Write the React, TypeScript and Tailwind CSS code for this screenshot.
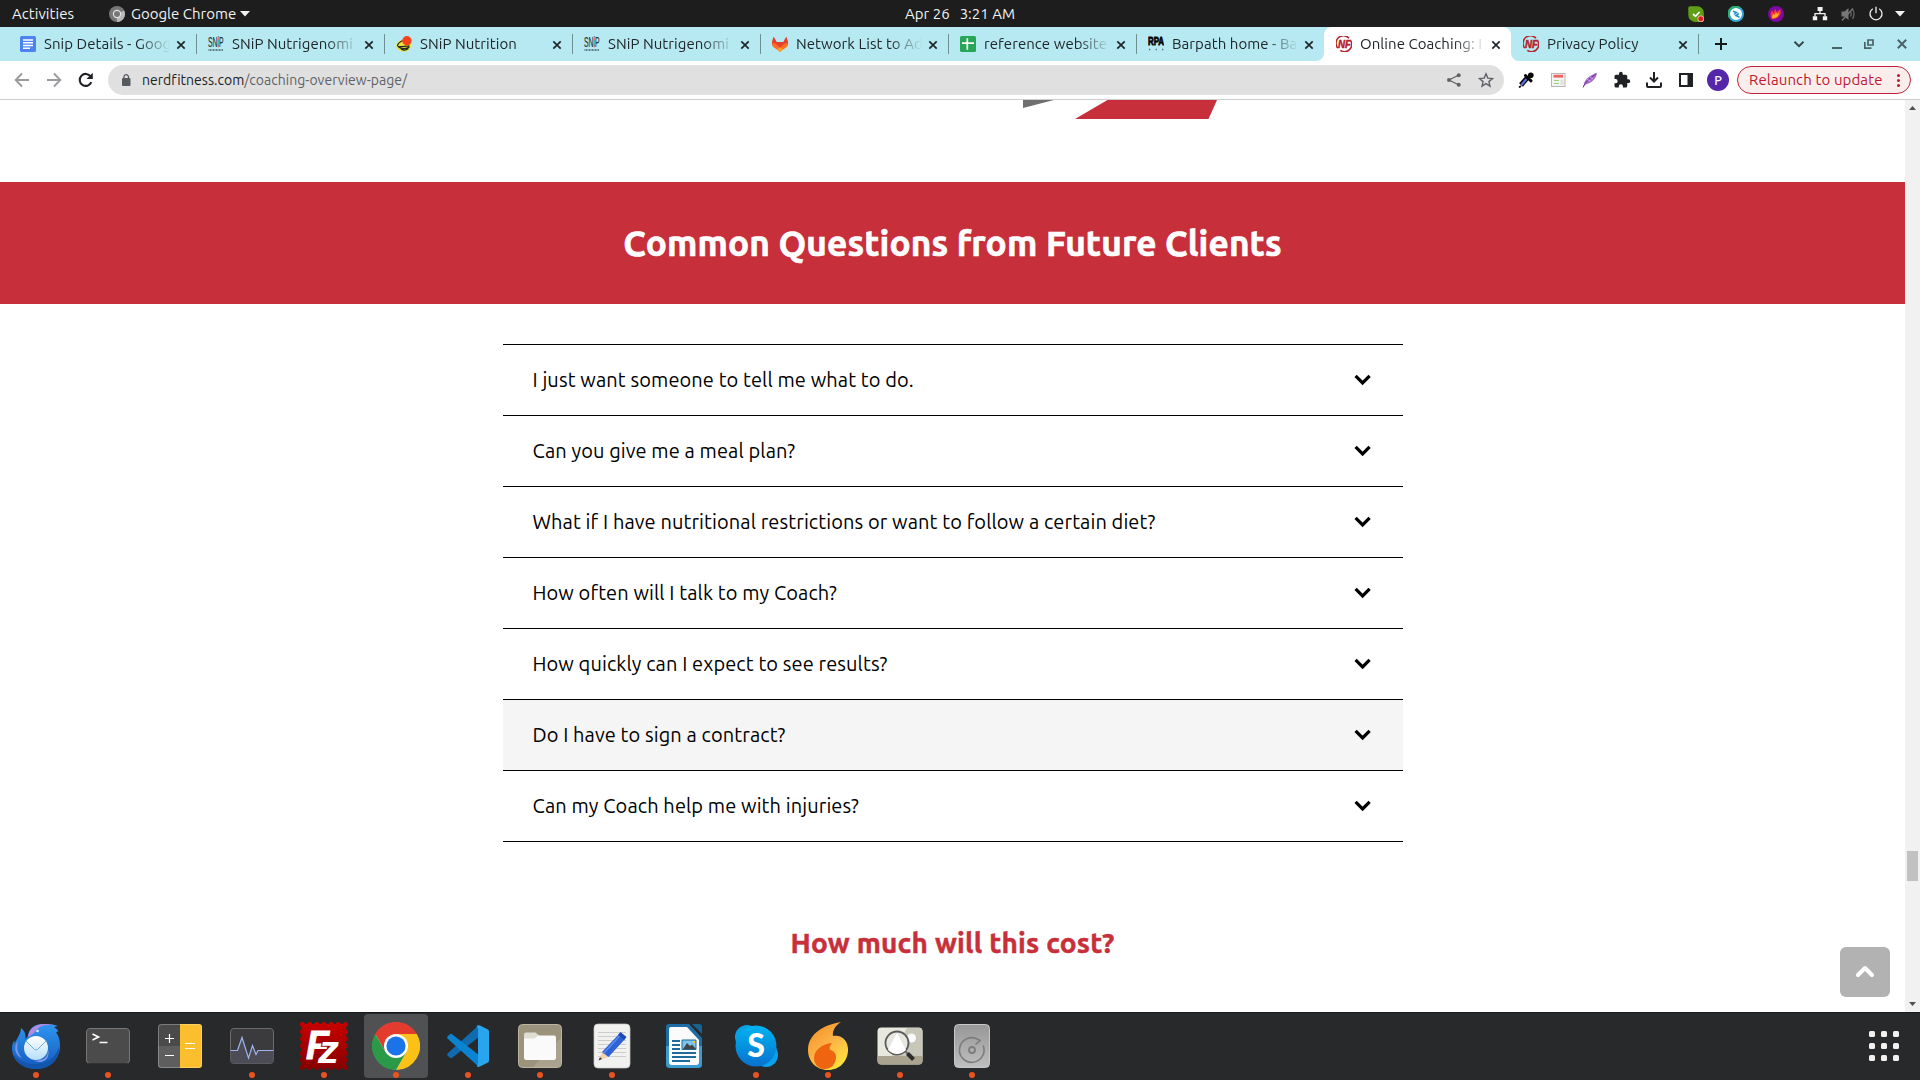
import React from "react";

type P = { children?: React.ReactNode; className?: string };

/* ---------- small helpers ---------- */

const Svg = ({ s = 16, vb, children, className = "" }: { s?: number; vb?: string } & P) => (
  <svg width={s} height={s} viewBox={vb ?? `0 0 ${s} ${s}`} fill="none" className={"block shrink-0 " + className}>
    {children}
  </svg>
);

const Cell = ({ children }: P) => <div className="flex h-8 w-8 shrink-0 items-center justify-center">{children}</div>;

/* ---------- favicons ---------- */

const DocsIcon = () => (
  <Svg>
    <rect width="16" height="16" rx="1.5" fill="#4c83ee" />
    <path d="M3 4h10M3 6.7h10M3 9.4h10M3 12.2h7" stroke="#fff" strokeWidth="1.5" />
  </Svg>
);

const SnipIcon = () => (
  <Svg>
    <text x="0" y="11" fontFamily="Liberation Sans" fontSize="14.5" textLength="15.6" lengthAdjust="spacingAndGlyphs" fill="#24383d" stroke="#24383d" strokeWidth=".2">SNiP</text>
    <path d="M10.300 1v3M10.300 9.500v2" stroke="#e2735a" strokeWidth="1" />
    <path d="M10.300 4.500v4" stroke="#4cc3a0" strokeWidth="1" />
    <path d="M.5 14h15" stroke="#3f5a60" strokeWidth="2" strokeDasharray="1 .5" opacity=".75" />
  </Svg>
);

const NutritionIcon = () => (
  <Svg>
    <ellipse cx="7.700" cy="9.700" rx="7.500" ry="6" fill="#f2e33a" />
    <path d="M7.500 4.500C4.500 5 1.500 8 1.500 9.800s6 .4 12 0M2.500 11c2 2 8 2.600 11-.3M5 13c2.500 1.600 5.500 1 7.500-.4" stroke="#1f2b25" strokeWidth="1.200" />
    <circle cx="10.900" cy="4.800" r="4.700" fill="#f9431c" />
  </Svg>
);

const GitlabIcon = () => (
  <Svg>
    <path d="M1.700.6 0 5.500v3L8 15.700l8-7.200v-3L14.300.6 11.300 6H4.700z" fill="#e2432a" />
    <path d="M0 7.500c2-.8 3.400 0 4.300.8L8 11.800l3.700-3.500c.9-.8 2.300-1.600 4.300-.8 0 2-.8 3.200-2 4L8 15.700 2 11.500C.8 10.700 0 9.500 0 7.500z" fill="#fc6d26" />
    <path d="M8 11.500 4.700 13.400 8 15.700l3.300-2.300z" fill="#fca326" />
  </Svg>
);

const SheetsIcon = () => (
  <Svg>
    <rect width="16" height="16" rx="1.5" fill="#27a658" />
    <path d="M2 7.200h12M7.300 2.200v11.600" stroke="#fff" strokeWidth="1.700" />
  </Svg>
);

const RpaIcon = () => (
  <Svg>
    <text x="0" y="9" fontFamily="Liberation Sans" fontWeight="700" fontSize="10.500" textLength="16" lengthAdjust="spacingAndGlyphs" fill="#050505" stroke="#050505" strokeWidth=".8">RPA</text>
    <path d="M1 13.500h1.200M7.600 13.500h1.200M14 13.500h1.200" stroke="#47656b" strokeWidth="1.400" />
  </Svg>
);

const NerdIcon = () => (
  <Svg>
    <path d="M13 2.300A7.200 7.200 0 0 0 1.800 12M14.800 5A7.200 7.200 0 0 1 4.300 14.300" stroke="#b5232b" strokeWidth="1.500" />
    <text x="2" y="12" fontFamily="Liberation Sans" fontWeight="700" fontStyle="italic" fontSize="10.500" textLength="13" lengthAdjust="spacingAndGlyphs" fill="#b5232b" stroke="#b5232b" strokeWidth=".5">NF</text>
  </Svg>
);

/* ---------- top system bar ---------- */

const TopBar = () => (
  <header className="grid h-[27px] grid-cols-3 bg-[#1d1d1d] text-[15px] leading-[27px] text-[#f2f2f2]">
    <div className="flex items-center pl-3">
      <span className="w-[97px] tracking-[0.06px]">Activities</span>
      <Svg>
        <circle cx="8" cy="8" r="8" fill="#777" />
        <path d="M8 8 15.200 4.600A8 8 0 0 1 8 16z" fill="#b9b9b9" />
        <circle cx="8" cy="8" r="4.200" fill="#e4e4e4" />
        <circle cx="8" cy="8" r="3" fill="#777" />
      </Svg>
      <span className="ml-1.5 w-[109px]">Google Chrome</span>
      <svg width="10" height="6" viewBox="0 0 10 6" className="block"><path d="M0 0h10L5 5.500z" fill="#f2f2f2" /></svg>
    </div>
    <div className="flex justify-center gap-2.5 whitespace-nowrap">
      <span>Apr 26</span>
      <span>3:21 AM</span>
    </div>
    <div className="flex items-center justify-end pr-[15px]">
      <Svg className="mr-6">
        <path d="M2 .3h7.500a6.500 6.500 0 0 1 6.300 6.500V14a2 2 0 0 1-2 2H7A7 7 0 0 1 .3 9V2A1.700 1.700 0 0 1 2 .3z" fill="#5f9f16" />
        <path d="m5 8 2.500 2.300L11.500 6" stroke="#fff" strokeWidth="1.800" />
        <circle cx="12.800" cy="12.800" r="3" fill="#e02020" stroke="#f2d5c5" strokeWidth=".8" />
      </Svg>
      <Svg className="mr-6">
        <circle cx="8" cy="8" r="7" fill="#fff" stroke="#31a7d8" strokeWidth="2" />
        <path d="M2 12A7 7 0 0 1 12 2.300" stroke="#2cae71" strokeWidth="2" />
        <path d="M5 5.200 8.500 6.500 6 8.500M10.800 7.500 8 9.500l3.500 1.700" stroke="#1f93c9" strokeWidth="1.600" />
      </Svg>
      <Svg className="mr-[28px]">
        <circle cx="8" cy="8" r="8" fill="#7d09a0" />
        <path d="M4 13C1.500 9 3 6 4 4l1.500 3L7.200 2.500 8.500 6 12.500 3c-.5 2 1 3 0 5-1.200 3-4 5-8.500 5z" fill="#f5353a" />
        <path d="M4.500 12.500C3.500 10 5 8 5.500 8l1 1L8 6l.8 2L11 6.500c0 3-2 5.500-6.500 6z" fill="#ffb01f" />
      </Svg>
      <Svg className="mr-3">
        <path d="M5.600 1h5v4h-5zM.8 10.300h4.400v4H.8zM10.800 10.300h4.400v4h-4.400z" fill="#f2f2f2" />
        <path d="M8 5v2.600M3 10.500V7.700h10v2.800" stroke="#f2f2f2" strokeWidth="1.300" />
      </Svg>
      <Svg className="mr-3">
        <path d="M1.500 5.500h3L8.500 2v12l-4-3.500h-3z" fill="#777" />
        <path d="M10.500 5.500q1.500 2.500 0 5M12.500 3q3 5 0 10" stroke="#666" strokeWidth="1.300" />
        <path d="m2 14.500 11-12" stroke="#777" strokeWidth="1.400" />
      </Svg>
      <Svg className="mr-[11px]">
        <path d="M4.800 2.700a6 6 0 1 0 6.400 0M8 .8v6.500" stroke="#f2f2f2" strokeWidth="1.300" />
      </Svg>
      <svg width="10" height="6" viewBox="0 0 10 6" className="block"><path d="M0 0h10L5 5.500z" fill="#f2f2f2" /></svg>
    </div>
  </header>
);

/* ---------- tab strip ---------- */

const TabClose = () => (
  <Svg s={10} className="mt-px"><path d="m1.300 1.300 7.400 7.400m0-7.400-7.400 7.400" stroke="#20272a" strokeWidth="1.700" /></Svg>
);

const tabs: { icon: React.FC; title: string; active?: boolean; noLine?: boolean; narrow?: boolean }[] = [
  { icon: DocsIcon, title: "Snip Details - Goog" },
  { icon: SnipIcon, title: "SNiP Nutrigenomi" },
  { icon: NutritionIcon, title: "SNiP Nutrition" },
  { icon: SnipIcon, title: "SNiP Nutrigenomi" },
  { icon: GitlabIcon, title: "Network List to Ad" },
  { icon: SheetsIcon, title: "reference website" },
  { icon: RpaIcon, title: "Barpath home - Ba", noLine: true },
  { icon: NerdIcon, title: "Online Coaching: I", active: true, noLine: true, narrow: true },
  { icon: NerdIcon, title: "Privacy Policy", narrow: true },
];

const TabStrip = () => (
  <div className="flex h-[34px] bg-[#b6e9f1] pl-2 text-[#20272a]">
    {tabs.map((t, i) => (
      <div
        key={i}
        className={
          "relative flex h-full shrink-0 items-center pl-3 text-[15px] leading-[34px] " +
          (t.narrow ? "w-[187px] " : "w-[188px] ") +
          (t.active ? "rounded-t-lg bg-white" : "")
        }
      >
        {t.active && (
          <>
            <svg width="8" height="8" className="absolute -left-2 bottom-0"><path d="M8 0v8H0a8 8 0 0 0 8-8z" fill="#fff" /></svg>
            <svg width="8" height="8" className="absolute -right-2 bottom-0"><path d="M0 0v8h8a8 8 0 0 1-8-8z" fill="#fff" /></svg>
          </>
        )}
        <t.icon />
        <span
          className={
            "ml-2 whitespace-nowrap tracking-[0.06px] [mask-image:linear-gradient(to_right,#000_94px,transparent_126px)] " +
            (t.narrow ? "w-[125px]" : "w-[126px]")
          }
        >
          {t.title}
        </span>
        <span className="ml-1.5"><TabClose /></span>
        {!t.noLine && <span className="absolute right-[-1px] top-[7px] h-5 w-px bg-[#708f94]" />}
      </div>
    ))}
    <div className="flex flex-1 items-center pl-4">
      <Svg s={14}><path d="M7 1v12M1 7h12" stroke="#17191b" strokeWidth="2" /></Svg>
      <Svg s={12} className="ml-[65px]"><path d="m1.500 3.800 4.500 4.400 4.500-4.400" stroke="#33464a" strokeWidth="1.900" /></Svg>
      <Svg s={10} className="ml-[27px]"><path d="M0 9h10" stroke="#4c6266" strokeWidth="2" /></Svg>
      <Svg s={10} className="ml-[22px]">
        <path d="M4 1h5v5H4z" stroke="#4c6266" strokeWidth="1.700" />
        <path d="M.8 3v6.200H7.500" stroke="#4c6266" strokeWidth="1.700" />
      </Svg>
      <Svg s={10} className="ml-[23px]"><path d="m.8.8 8.400 8.400m0-8.400L.8 9.200" stroke="#4c6266" strokeWidth="2" /></Svg>
    </div>
  </div>
);

/* ---------- toolbar ---------- */

const Toolbar = () => (
  <div className="flex h-[39px] items-center border-b border-[#cccdce] bg-white pl-3.5">
    <div className="flex gap-4">
      <Svg><path d="M15 8H2M8 1.500 1.700 8 8 14.500" stroke="#9a9b9e" strokeWidth="1.900" /></Svg>
      <Svg><path d="M1 8h13M8 1.500 14.300 8 8 14.500" stroke="#9a9b9e" strokeWidth="1.900" /></Svg>
      <Svg>
        <path d="M13.300 10.200A6 6 0 1 1 12.700 4.500" stroke="#202124" strokeWidth="2.100" />
        <path d="M14.800.8v6.300H8.500z" fill="#202124" />
      </Svg>
    </div>
    <div className="ml-3.5 flex h-[30px] w-[1396px] items-center rounded-full bg-[#e0e0e0] pl-[13px] pr-2.5">
      <svg width="10" height="12" viewBox="0 0 10 12" className="block">
        <rect x="1" y="4" width="8.500" height="8" rx="1" fill="#56595d" />
        <path d="M2.900 4.500V3a2.300 2.300 0 0 1 4.600 0v1.500" fill="none" stroke="#56595d" strokeWidth="1.300" />
      </svg>
      <span className="ml-[11px] flex-1 text-[14px] tracking-[0.02px] text-[#5f6368]">
        <span className="text-[#202124]">nerdfitness.com</span>/coaching-overview-page/
      </span>
      <Svg>
        <path d="M13 3 3 8l10 5" stroke="#5f6368" strokeWidth="1.300" />
        <circle cx="12.700" cy="3.200" r="2" fill="#5f6368" />
        <circle cx="3" cy="8" r="2" fill="#5f6368" />
        <circle cx="12.700" cy="12.800" r="2" fill="#5f6368" />
      </Svg>
      <Svg className="ml-4">
        <path d="m8 1.800 1.800 4.300 4.700.4-3.600 3.100 1.100 4.600L8 11.700l-4 2.500 1.100-4.600-3.600-3.100 4.700-.4z" stroke="#5f6368" strokeWidth="1.400" />
      </Svg>
    </div>
    <div className="ml-1.5 flex items-center">
      <Cell>
        <Svg>
          <path d="m3 13 7-8" stroke="#0a0a0a" strokeWidth="5" />
          <path d="m3.500 12.800 5-5.800" stroke="#5a6ee0" strokeWidth="2.200" />
          <path d="m7.500 3.500 5.500 5.300M12 4.500 10 6.500" stroke="#050505" strokeWidth="3" strokeLinecap="round" />
          <circle cx="12.800" cy="3.200" r="2.800" fill="#050505" />
          <path d="m1 15.500 2-1.500" stroke="#0a0a0a" strokeWidth="1.600" />
        </Svg>
      </Cell>
      <Cell>
        <Svg>
          <rect x="1.500" y="1.500" width="13.500" height="13" fill="#f3f3f3" stroke="#b5b5b5" />
          <path d="M3.500 4.200h9.500" stroke="#f0625b" strokeWidth="2.800" />
          <path d="M4 8.500h5M4 11.500h5" stroke="#9bd17a" strokeWidth="1.200" />
          <path d="M10.500 8h3v5h-3z" fill="#e1e1e1" />
        </Svg>
      </Cell>
      <Cell>
        <Svg>
          <path d="M1.500 14.500C2 7 8 3.500 15 .8 14 7 10 11 3.500 12.500z" fill="#a46bc8" />
          <path d="M1 15.500C4 9 8 6 14 2" stroke="#6f2f9c" strokeWidth="1" />
          <path d="M5 7.500 8.500 9M8 5l3 2" stroke="#e5cff1" strokeWidth=".7" />
        </Svg>
      </Cell>
      <Cell>
        <Svg s={18} vb="0 0 24 24">
          <path d="M20.500 11H19V7a2 2 0 0 0-2-2h-4V3.500a2.500 2.500 0 0 0-5 0V5H4a2 2 0 0 0-2 2v3.800h1.500a2.700 2.700 0 0 1 0 5.400H2V20a2 2 0 0 0 2 2h3.800v-1.500a2.700 2.700 0 0 1 5.400 0V22H17a2 2 0 0 0 2-2v-4h1.500a2.500 2.500 0 0 0 0-5z" fill="#202124" />
        </Svg>
      </Cell>
      <Cell>
        <Svg>
          <path d="M8 0v8.500M4 5.500l4 4 4-4M1 10.500V14a1 1 0 0 0 1 1h12a1 1 0 0 0 1-1v-3.500" stroke="#202124" strokeWidth="2" />
        </Svg>
      </Cell>
      <Cell>
        <Svg>
          <path d="M2 2h12v12H2z" stroke="#202124" strokeWidth="2" />
          <path d="M9.500 2H14v12H9.500z" fill="#202124" />
        </Svg>
      </Cell>
      <Cell>
        <span className="flex h-[22px] w-[22px] items-center justify-center rounded-full bg-[#5526a8] text-[12.5px] font-medium leading-none text-white">P</span>
      </Cell>
    </div>
    <div className="ml-[3px] flex h-7 w-[174px] items-center rounded-full border border-[#c5203a] bg-[#faeeed] pl-[11px] text-[15px] text-[#c0172f]">
      <span className="w-[135px] whitespace-nowrap tracking-[0.12px]">Relaunch to update</span>
      <span className="ml-[13px] flex flex-col gap-0.5">
        <i className="h-[3px] w-[3px] rounded-full bg-[#c0172f]" />
        <i className="h-[3px] w-[3px] rounded-full bg-[#c0172f]" />
        <i className="h-[3px] w-[3px] rounded-full bg-[#c0172f]" />
      </span>
    </div>
  </div>
);

/* ---------- page ---------- */

const questions: { q: string; hover?: boolean }[] = [
  { q: "I just want someone to tell me what to do." },
  { q: "Can you give me a meal plan?" },
  { q: "What if I have nutritional restrictions or want to follow a certain diet?" },
  { q: "How often will I talk to my Coach?" },
  { q: "How quickly can I expect to see results?" },
  { q: "Do I have to sign a contract?", hover: true },
  { q: "Can my Coach help me with injuries?" },
];

const Page = () => (
  <main className="relative flex h-[912px] bg-white">
    <div className="flex flex-1 flex-col overflow-hidden">
      <div className="h-[82px]">
        <svg width="194" height="20" viewBox="1023 0 194 20" className="ml-[1023px] block">
          <path d="M1023 0h31l-31 8z" fill="#6f6f6f" />
          <path d="M1107.500 0H1217l-8.500 19H1075z" fill="#c72f3b" />
        </svg>
      </div>
      <h1 className="flex h-[122px] items-center justify-center bg-[#c72f3b] text-[35.2px] font-bold tracking-[0.14px] text-white [-webkit-text-stroke:0.7px_#fff]">
        <span>Common Questions from Future Clients</span>
      </h1>
      <ul className="mx-auto mt-10 w-[900px] border-t border-black">
        {questions.map((x) => (
          <li
            key={x.q}
            className={
              "flex h-[71px] items-center justify-between border-b border-black pl-[30px] pr-[31px] text-[20px] tracking-[0.1px] text-black " +
              (x.hover ? "bg-[#f5f5f5]" : "")
            }
          >
            <span>{x.q}</span>
            <Svg s={18}><path d="M1.600 4.800 8.600 11.900 15.600 4.800" stroke="#000" strokeWidth="3.200" /></Svg>
          </li>
        ))}
      </ul>
      <h2 className="mt-20 text-center text-[28px] font-bold leading-[42px] tracking-[0.2px] text-[#c72f3b] [-webkit-text-stroke:0.5px_#c72f3b]">How much will this cost?</h2>
    </div>
    <div className="flex w-[15px] flex-col items-center bg-[#f1f1f1]">
      <svg width="7" height="4" className="mt-1.5 block"><path d="M3.500 0 7 4H0z" fill="#505050" /></svg>
      <div className="mt-[741px] h-[30px] w-[11px] bg-[#c1c1c1]" />
      <svg width="7" height="4" className="mb-1.5 mt-auto block"><path d="M0 0h7L3.500 4z" fill="#505050" /></svg>
    </div>
    <button className="absolute bottom-[15px] right-[30px] flex h-[50px] w-[50px] items-center justify-center rounded-md bg-[#b2b2b2]">
      <Svg s={20}><path d="m3 13 7-7 7 7" stroke="#fff" strokeWidth="4" strokeLinecap="round" strokeLinejoin="round" /></Svg>
    </button>
  </main>
);

/* ---------- dock ---------- */

const Dock48 = ({ children }: P) => <Svg s={48}>{children}</Svg>;

const Thunderbird = () => (
  <Dock48>
    <defs>
      <linearGradient id="tb" x1="0" y1="0" x2="0" y2="1"><stop stopColor="#2f96f0" /><stop offset="1" stopColor="#1459bd" /></linearGradient>
      <linearGradient id="tbe" x1="0" y1="0" x2="0" y2="1"><stop stopColor="#fff" /><stop offset="1" stopColor="#b5defb" /></linearGradient>
    </defs>
    <path d="M16 14C17 5 25 1.500 32 2c5 .3 10 .5 14 2-2 .3-3 .8-4 1.500 2 .5 3.500 2 4.500 4-1 0-2 .3-2.500.8C47 14 48 19 48 24c0 13-10 23-24 23S0 38 0 26c0-3 1-6 2.500-7.500V22C5 16 9 12 9 6c4 3 5 7 4.500 11z" fill="url(#tb)" />
    <path d="M2 33c7 8 18 11 29 8 9-3 14-9 16-16 1 13-9 22-23 22C12 47 5 41 2 33z" fill="#1255ad" />
    <path d="M16 15C17 7 23 2 32 2c4 0 8 .3 11 1-6-.5-12 0-15 2-5 3-6 8-12 10z" fill="#b08be4" />
    <path d="M6 19c-2 7 0 13 4 17-7-2-9-12-4-17z" fill="#7997ea" />
    <path d="M36 27c1 6-3 10-7 11-4 1-6 1-8 0 8 5 18 0 15-11z" fill="#8b9df0" />
    <circle cx="24" cy="26" r="12" fill="url(#tbe)" />
    <path d="m14 19 8.500 8.500q1.500 1 3 0L34 19" stroke="#71abe0" strokeWidth="1" />
    <circle cx="25.500" cy="9" r="1.300" fill="#d8edff" />
  </Dock48>
);

const Terminal = () => (
  <Dock48>
    <rect x="2.500" y="6.500" width="43" height="35" rx="3.500" fill="#4b4b4b" stroke="#777" />
    <path d="M4 41.500h40" stroke="#333" />
    <path d="m8.500 12 6 3-6 3" stroke="#fff" strokeWidth="1.600" /><path d="M15.500 20.500h8" stroke="#fff" strokeWidth="1.500" />
  </Dock48>
);

const Calculator = () => (
  <Dock48>
    <path d="M5 2h19v44H5a3 3 0 0 1-3-3V5a3 3 0 0 1 3-3z" fill="#4a4a4a" />
    <path d="M2 24h22v22H5a3 3 0 0 1-3-3z" fill="#5e5e5e" />
    <path d="M24 2h19a3 3 0 0 1 3 3v38a3 3 0 0 1-3 3H24z" fill="#fbbe2c" />
    <rect x="2.500" y="2.500" width="43" height="43" rx="3" stroke="#fff" opacity=".28" />
    <path d="M13.500 12v9M9 16.500h9M9 33.500h9M29 21.500h10M29 26.500h10" stroke="#fff" strokeWidth="1.200" />
  </Dock48>
);

const Monitor = () => (
  <Dock48>
    <rect x="2.500" y="6.500" width="43" height="35" rx="3.500" fill="#3b3b3d" stroke="#6b6b6b" />
    <path d="M2.500 28h7L14 15.500 20.500 36l4-12 3.500 9 2-5h15.500v10a3.500 3.500 0 0 1-3.500 3.500H6A3.500 3.500 0 0 1 2.500 38z" fill="#4b4c55" />
    <path d="M2.500 28.500h7L14 15.500 20.500 36l4-12.500 3.500 9 2-4h15.500" stroke="#9db3ec" strokeWidth="1.200" />
  </Dock48>
);

const FileZilla = () => (
  <Dock48>
    <defs><linearGradient id="fz" x1="0" y1="0" x2="0" y2="48" gradientUnits="userSpaceOnUse"><stop stopColor="#c90000" /><stop offset="1" stopColor="#850000" /></linearGradient></defs>
    <rect x="2" y="2" width="44" height="44" fill="url(#fz)" />
    <rect x="2.500" y="2.500" width="43" height="43" stroke="url(#fz)" strokeWidth="5" strokeLinecap="round" strokeDasharray="0.01 7.157" />
    <text x="6" y="37" fontFamily="Liberation Sans" fontWeight="700" fontStyle="italic" fontSize="40" textLength="23" lengthAdjust="spacingAndGlyphs" fill="#fff" stroke="#fff" strokeWidth="1">F</text>
    <text x="18" y="41" fontFamily="Liberation Sans" fontWeight="700" fontStyle="italic" fontSize="38" textLength="21" lengthAdjust="spacingAndGlyphs" fill="#fff" stroke="#a00000" strokeWidth="2" paintOrder="stroke">z</text>
  </Dock48>
);

const Chrome = () => (
  <Dock48>
    <circle cx="24" cy="24" r="23.500" fill="#fff" />
    <path d="M24 12h20.800A24 24 0 0 0 3.200 12l10.400 18L24 12z" fill="#e33b2e" />
    <path d="M34.400 30 24 48A24 24 0 0 0 44.800 12H24z" fill="#fbc116" />
    <path d="M13.600 30 3.200 12A24 24 0 0 0 24 48l10.400-18z" fill="#2a9a48" />
    <circle cx="24" cy="24" r="12" fill="#fff" />
    <circle cx="24" cy="24" r="9.600" fill="#1a73e8" />
  </Dock48>
);

const VsCode = () => (
  <Dock48>
    <path d="M35 3 3.500 31.500q-.8 1 0 2L6 35.800q1 .7 2 0L35 15z" fill="#0f6cb0" />
    <path d="M35 45 3.500 16.500q-.8-1 0-2L6 12.200q1-.7 2 0L35 33z" fill="#0a84d0" />
    <path d="M33 44.500q1 .8 3 0l8-4q1-.6 1-2v-29q0-1.400-1-2l-8-4q-2-.8-3.500.7L34 7v34z" fill="#29a5f0" />
  </Dock48>
);

const Files = () => (
  <Dock48>
    <rect x="2.500" y="2.500" width="43" height="43" rx="4" fill="#9c937c" stroke="#bbb4a3" />
    <path d="M45 16v25a4 4 0 0 1-4 4H17z" fill="#aaa28e" />
    <path d="M10 10.500h9.500l4 3.500v6H8v-7.500a2 2 0 0 1 2-2z" fill="#e0ddd3" />
    <path d="M8 16.500h10.500l4-3H38a2 2 0 0 1 2 2v20a2.500 2.500 0 0 1-2.500 2.500h-27A2.500 2.500 0 0 1 8 35.500z" fill="#fafafa" />
  </Dock48>
);

const Editor = () => (
  <Dock48>
    <rect x="6" y="2" width="36" height="44" rx="4" fill="#f1f1f0" stroke="#ccc" strokeWidth=".7" />
    <path d="M10 10.500h28M10 14.500h28M10 18.500h28M10 22.500h28M10 26.500h28M10 30.500h28M10 34.500h28" stroke="#cdcdcd" />
    <path d="m10.500 38.500 4-8.500 5.500 5z" fill="#f4d2ac" /><path d="m10.500 38.500 1.500-3.200 2 1.800z" fill="#333" />
    <path d="M14 30 31.500 11.500l6 5L20.500 35z" fill="#2d62d8" /><path d="m30 13 2.500-3 6 5-2.500 3z" fill="#1e48b4" />
    <path d="m15.500 31.500 16-17.500" stroke="#5a8df0" strokeWidth="1.400" />
  </Dock48>
);

const Writer = () => (
  <Dock48>
    <path d="M9 2h20l13 14v26a4 4 0 0 1-4 4H10a4 4 0 0 1-4-4V5a3 3 0 0 1 3-3z" fill="#1d6ca4" />
    <path d="M6 24h36v18a4 4 0 0 1-4 4H10a4 4 0 0 1-4-4z" fill="#3d9ccd" />
    <path d="M11 5h16l12 13v22q0 3-3 3H12q-3 0-3-3V7q0-2 2-2z" fill="#fbfbfb" />
    <path d="M32 2h7a3 3 0 0 1 3 3v7z" fill="#176392" />
    <path d="M12 19h8M12 23h8M12 27h8M12 31h24M12 35h24M12 39h18" stroke="#1d6a9e" strokeWidth="1.900" />
    <path d="M22 18h14v9.500H22z" fill="#7cc4ec" stroke="#1d6a9e" /><path d="m23 27 4-6 3 3 2-1.500 4 4.500z" fill="#444" />
    <path d="M32 19h3v2.500z" fill="#ffc926" />
  </Dock48>
);

const Skype = () => (
  <Dock48>
    <defs><linearGradient id="sk" x1="0" y1="0" x2="0" y2="1"><stop stopColor="#00b4f0" /><stop offset="1" stopColor="#0872d0" /></linearGradient></defs>
    <circle cx="15" cy="15" r="12" fill="#0aa0e4" /><circle cx="34" cy="33" r="12" fill="#0aa2ec" />
    <circle cx="24" cy="24" r="20.500" fill="url(#sk)" />
    <text x="24" y="35" textAnchor="middle" fontFamily="Lato" fontWeight="900" fontSize="32" fill="#fff">S</text>
  </Dock48>
);

const Flame = () => (
  <Dock48>
    <defs>
      <linearGradient id="fl" x1="0" y1="0" x2=".7" y2="1"><stop stopColor="#f48a20" /><stop offset=".55" stopColor="#fbb347" /><stop offset="1" stopColor="#ffe23c" /></linearGradient>
    </defs>
    <path d="M37 0c-5 3-9 8.500-8 14 9-1.500 15 5 15 13.500C44 39 36 48 24 48S4 39 4 28C4 13 18 3 37 0z" fill="url(#fl)" />
    <path d="M28 21c-2 2.500-3 4.500-2 7 4 .5 6.500 4 6 8-1 7-5 11-11 11-7 0-11-5-11-11 0-8 8-14 18-15z" fill="#ee6411" />
  </Dock48>
);

const ImageViewer = () => (
  <Dock48>
    <rect x="1.500" y="5.500" width="45" height="37" rx="4" fill="#e9e8df" />
    <path d="M31 6h12q3.500 0 3.500 4v25H15z" fill="#c9c7ba" />
    <circle cx="35.500" cy="16" r="4.500" fill="#fafafa" />
    <path d="M1.500 34h45v4.500a4 4 0 0 1-4 4h-37a4 4 0 0 1-4-4z" fill="#aaa38f" />
    <circle cx="21" cy="21" r="11.500" fill="#e7e7e2" stroke="#5b5b5b" strokeWidth="1.800" />
    <path d="m12 28 9-17 9 17q-9 8-18 0z" fill="#fff" />
    <path d="m29.500 29.500 3 3" stroke="#666" strokeWidth="2" /><path d="m31.500 31.500 6 6" stroke="#2d2d2d" strokeWidth="4" />
  </Dock48>
);

const Disks = () => (
  <Dock48>
    <defs><linearGradient id="dk" x1="0" y1="0" x2="0" y2="1"><stop stopColor="#979797" /><stop offset="1" stopColor="#bfbfbf" /></linearGradient></defs>
    <rect x="6.500" y="2.500" width="35" height="43" rx="4" fill="url(#dk)" stroke="#c8c8c8" />
    <path d="M35.200 23.500a12.300 12.300 0 1 1-6-6.500l3.500 2" stroke="#7d7d7d" strokeWidth="1.600" />
    <path d="m27.500 22.500 5-4.500" stroke="#7d7d7d" strokeWidth="1.600" />
    <circle cx="24" cy="28" r="3" stroke="#7d7d7d" strokeWidth="1.800" />
  </Dock48>
);

const apps: { I: React.FC; run: boolean; focus?: boolean }[] = [
  { I: Thunderbird, run: true },
  { I: Terminal, run: true },
  { I: Calculator, run: false },
  { I: Monitor, run: true },
  { I: FileZilla, run: true },
  { I: Chrome, run: true, focus: true },
  { I: VsCode, run: true },
  { I: Files, run: true },
  { I: Editor, run: true },
  { I: Writer, run: false },
  { I: Skype, run: true },
  { I: Flame, run: true },
  { I: ImageViewer, run: true },
  { I: Disks, run: true },
];

const Dock = () => (
  <footer className="flex h-[68px] items-start gap-2 border-t border-[#18191a] bg-[#28292b] pl-1 pt-px">
    {apps.map(({ I, run, focus }, i) => (
      <div key={i} className={"flex h-16 w-16 flex-col items-center rounded pt-2 " + (focus ? "bg-[#505153]" : "")}>
        <I />
        {run && <i className="mt-0.5 h-1.5 w-1.5 rounded-full bg-[#e95420]" />}
      </div>
    ))}
    <div className="ml-auto mr-[21px] mt-[17px] grid grid-cols-3 gap-1.5">
      {Array.from({ length: 9 }, (_, i) => (
        <i key={i} className="h-1.5 w-1.5 rounded-[1.5px] bg-[#f2f1ef]" />
      ))}
    </div>
  </footer>
);

export default function App() {
  return (
    <div className="flex h-[1080px] w-[1920px] flex-col overflow-hidden bg-white font-['Ubuntu','Noto_Sans',sans-serif]">
      <TopBar />
      <TabStrip />
      <Toolbar />
      <Page />
      <Dock />
    </div>
  );
}
